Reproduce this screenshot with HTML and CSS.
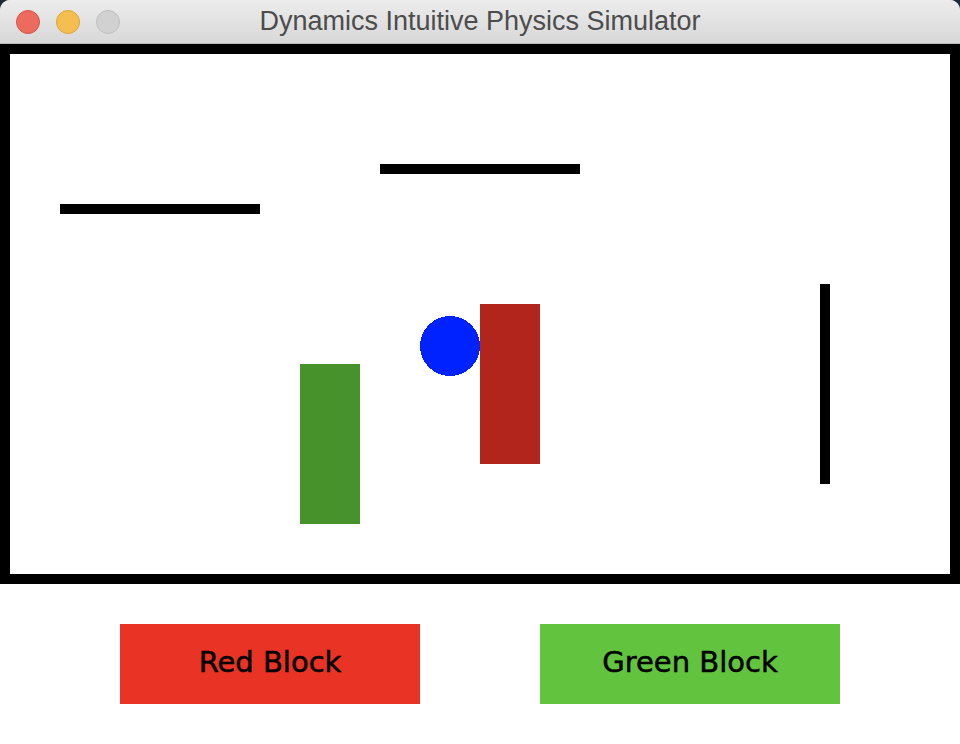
FILE: index.html
```html
<!DOCTYPE html>
<html>
<head>
<meta charset="utf-8">
<link rel="stylesheet" href="styles.css">
</head>
<body>
<div class="window">
  <div class="titlebar">
    <div class="lights">
      <span class="light red"></span>
      <span class="light yellow"></span>
      <span class="light gray"></span>
    </div>
    <div class="title">Dynamics Intuitive Physics Simulator</div>
  </div>
  <div class="canvas">
    <svg class="scene" width="940" height="520" viewBox="0 0 940 520">
      <rect x="50" y="150" width="200" height="10" fill="#000"/>
      <rect x="370" y="110" width="200" height="10" fill="#000"/>
      <rect x="810" y="230" width="10" height="200" fill="#000"/>
      <rect x="290" y="310" width="60" height="160" fill="#48922c"/>
      <rect x="470" y="250" width="60" height="160" fill="#b2251d"/>
      <circle cx="440" cy="292" r="30" fill="#0022ff" shape-rendering="crispEdges"/>
    </svg>
  </div>
  <div class="controls">
    <button class="btn btn-red">Red Block</button>
    <button class="btn btn-green">Green Block</button>
  </div>
</div>
</body>
</html>
```

FILE: styles.css
```css
html, body {
  margin: 0;
  padding: 0;
  background: #1d2a3c;
}
.window {
  width: 960px;
  height: 744px;
  background: #fff;
  border-radius: 10px 10px 0 0;
  overflow: hidden;
  display: flex;
  flex-direction: column;
}
.titlebar {
  height: 43px;
  border-bottom: 1px solid #b9b9b9;
  background: linear-gradient(#ececec, #d8d8d8);
  position: relative;
  display: flex;
  align-items: center;
  justify-content: center;
}
.lights {
  position: absolute;
  left: 16px;
  top: 10px;
  display: flex;
  gap: 16px;
}
.light {
  width: 24px;
  height: 24px;
  border-radius: 50%;
  box-sizing: border-box;
  display: block;
}
.red { background: #ec6a5e; border: 1px solid #d45448; }
.yellow { background: #f5bf4f; border: 1px solid #d9a33b; }
.gray { background: #d1d1d1; border: 1px solid #bdbdbd; }
.title {
  font-family: "Liberation Sans", Arial, sans-serif;
  font-size: 27px;
  color: #4c4c4c;
}
.canvas {
  border: 10px solid #000;
  width: 940px;
  height: 520px;
  background: #fff;
}
.scene {
  display: block;
}
.controls {
  display: flex;
  justify-content: center;
  gap: 120px;
  padding-top: 40px;
}
.btn {
  width: 300px;
  height: 80px;
  border: none;
  padding: 0 0 4px 0;
  margin: 0;
  font-family: "Comic Sans MS", "DejaVu Sans", sans-serif;
  font-size: 29px;
  color: #000;
  -webkit-text-stroke: 0.5px #000;
}
.btn-red { background: #e93324; }
.btn-green { background: #62c43e; }
```
